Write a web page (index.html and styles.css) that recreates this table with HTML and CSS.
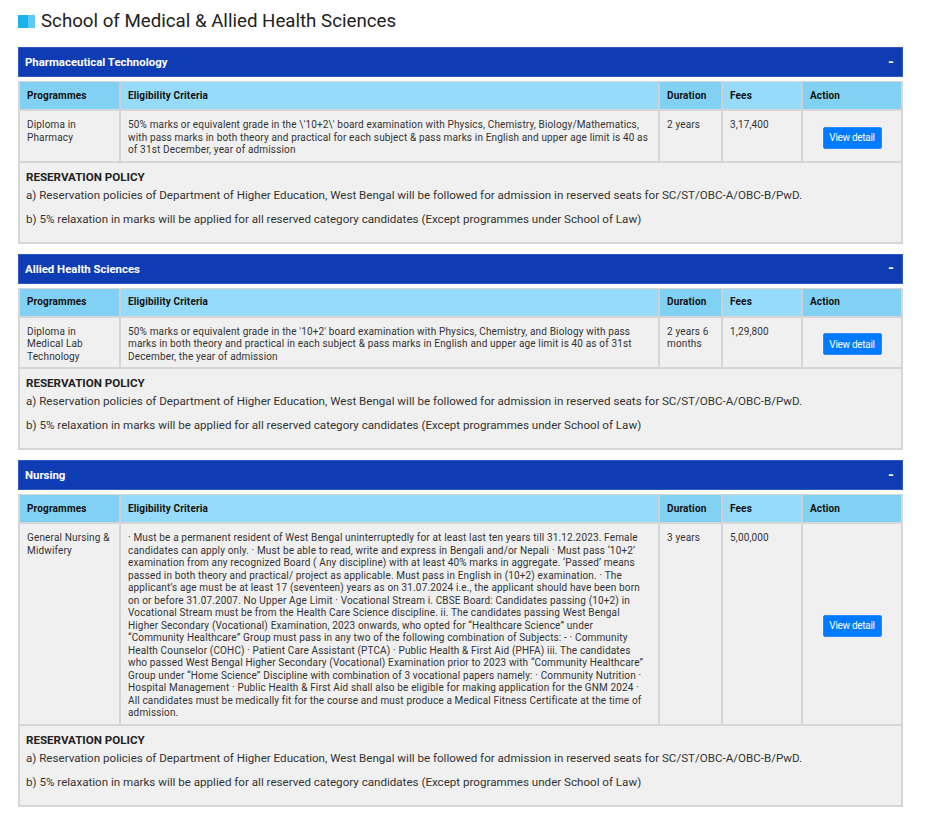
FILE: index.html
```html
<!DOCTYPE html>
<html>
<head>
<meta charset="utf-8">
<link rel="stylesheet" href="styles.css">
</head>
<body>
<div class="page">
  <h1 class="title"><span class="title-icon"><span class="sq1"></span><span class="sq2"></span></span>School of Medical &amp; Allied Health Sciences</h1>

  <section class="block">
    <div class="bar"><span>Pharmaceutical Technology</span><span class="toggle">-</span></div>
    <div class="panel">
      <table class="prog">
        <colgroup><col class="c1"><col class="c2"><col class="c3"><col class="c4"><col class="c5"></colgroup>
        <thead><tr><th class="dk">Programmes</th><th class="lt">Eligibility Criteria</th><th class="dk">Duration</th><th class="lt">Fees</th><th class="dk">Action</th></tr></thead>
        <tbody><tr>
          <td>Diploma in Pharmacy</td>
          <td>50% marks or equivalent grade in the \'10+2\' board examination with Physics, Chemistry, Biology/Mathematics, with pass marks in both theory and practical for each subject &amp; pass marks in English and upper age limit is 40 as of 31st December, year of admission</td>
          <td>2 years</td>
          <td>3,17,400</td>
          <td class="act"><button class="btn">View detail</button></td>
        </tr></tbody>
      </table>
      <div class="policy">
        <h4>RESERVATION POLICY</h4>
        <p>a) Reservation policies of Department of Higher Education, West Bengal will be followed for admission in reserved seats for SC/ST/OBC-A/OBC-B/PwD.</p>
        <p class="pb">b) 5% relaxation in marks will be applied for all reserved category candidates (Except programmes under School of Law)</p>
      </div>
    </div>
  </section>

  <section class="block">
    <div class="bar"><span>Allied Health Sciences</span><span class="toggle">-</span></div>
    <div class="panel">
      <table class="prog">
        <colgroup><col class="c1"><col class="c2"><col class="c3"><col class="c4"><col class="c5"></colgroup>
        <thead><tr><th class="dk">Programmes</th><th class="lt">Eligibility Criteria</th><th class="dk">Duration</th><th class="lt">Fees</th><th class="dk">Action</th></tr></thead>
        <tbody><tr>
          <td>Diploma in Medical Lab Technology</td>
          <td>50% marks or equivalent grade in the '10+2' board examination with Physics, Chemistry, and Biology with pass marks in both theory and practical in each subject &amp; pass marks in English and upper age limit is 40 as of 31st December, the year of admission</td>
          <td>2 years 6 months</td>
          <td>1,29,800</td>
          <td class="act"><button class="btn">View detail</button></td>
        </tr></tbody>
      </table>
      <div class="policy">
        <h4>RESERVATION POLICY</h4>
        <p>a) Reservation policies of Department of Higher Education, West Bengal will be followed for admission in reserved seats for SC/ST/OBC-A/OBC-B/PwD.</p>
        <p class="pb">b) 5% relaxation in marks will be applied for all reserved category candidates (Except programmes under School of Law)</p>
      </div>
    </div>
  </section>

  <section class="block">
    <div class="bar"><span>Nursing</span><span class="toggle">-</span></div>
    <div class="panel">
      <table class="prog">
        <colgroup><col class="c1"><col class="c2"><col class="c3"><col class="c4"><col class="c5"></colgroup>
        <thead><tr><th class="dk">Programmes</th><th class="lt">Eligibility Criteria</th><th class="dk">Duration</th><th class="lt">Fees</th><th class="dk">Action</th></tr></thead>
        <tbody><tr>
          <td>General Nursing &amp; Midwifery</td>
          <td>· Must be a permanent resident of West Bengal uninterruptedly for at least last ten years till 31.12.2023. Female candidates can apply only. · Must be able to read, write and express in Bengali and/or Nepali · Must pass ‘10+2’ examination from any recognized Board ( Any discipline) with at least 40% marks in aggregate. ‘Passed’ means passed in both theory and practical/ project as applicable. Must pass in English in (10+2) examination. · The applicant’s age must be at least 17 (seventeen) years as on 31.07.2024 i.e., the applicant should have been born on or before 31.07.2007. No Upper Age Limit · Vocational Stream i. CBSE Board: Candidates passing (10+2) in Vocational Stream must be from the Health Care Science discipline. ii. The candidates passing West Bengal Higher Secondary (Vocational) Examination, 2023 onwards, who opted for “Healthcare Science” under “Community Healthcare” Group must pass in any two of the following combination of Subjects: - · Community Health Counselor (COHC) · Patient Care Assistant (PTCA) · Public Health &amp; First Aid (PHFA) iii. The candidates who passed West Bengal Higher Secondary (Vocational) Examination prior to 2023 with “Community Healthcare” Group under “Home Science” Discipline with combination of 3 vocational papers namely: · Community Nutrition · Hospital Management · Public Health &amp; First Aid shall also be eligible for making application for the GNM 2024 · All candidates must be medically fit for the course and must produce a Medical Fitness Certificate at the time of admission.</td>
          <td>3 years</td>
          <td>5,00,000</td>
          <td class="act"><button class="btn">View detail</button></td>
        </tr></tbody>
      </table>
      <div class="policy">
        <h4>RESERVATION POLICY</h4>
        <p>a) Reservation policies of Department of Higher Education, West Bengal will be followed for admission in reserved seats for SC/ST/OBC-A/OBC-B/PwD.</p>
        <p class="pb">b) 5% relaxation in marks will be applied for all reserved category candidates (Except programmes under School of Law)</p>
      </div>
    </div>
  </section>
</div>
</body>
</html>
```
FILE: styles.css
```css
* { box-sizing: border-box; }
body {
  margin: 0;
  background: #fff;
  font-family: Roboto, "Liberation Sans", Arial, sans-serif;
  color: #333;
}
.page {
  width: 885px;
  margin-left: 18px;
  padding-top: 8px;
}
.title {
  display: flex;
  align-items: center;
  margin: 0 0 13px 0;
  font-size: 18.7px;
  font-weight: 400;
  line-height: 26px;
  color: #222;
}
.title-icon {
  display: flex;
  margin-right: 6px;
}
.sq1 { width: 10px; height: 13px; background: #1bb1ea; }
.sq2 { width: 7px; height: 13px; background: #5cc9f6; }

.block { margin-bottom: 10px; }
.bar {
  display: flex;
  justify-content: space-between;
  align-items: center;
  height: 30px;
  padding: 0 8px 0 6px;
  background: #0e3cb5;
  border: 1px solid #2f58c4;
  color: #fff;
  font-size: 11.4px;
  font-weight: 700;
}
.toggle { font-size: 15px; font-weight: 700; line-height: 1; }
.panel {
  margin-top: 4px;
  border: 2px solid #d6d6d6;
  border-top-width: 1px;
  background: #f0f0f0;
}
.prog {
  width: 100%;
  border-collapse: collapse;
  table-layout: fixed;
  font-size: 10px;
  line-height: 12.5px;
  letter-spacing: 0.15px;
}
.c1 { width: 100px; }
.c2 { width: 539px; }
.c3 { width: 63px; }
.c4 { width: 80px; }
.c5 { width: auto; }
.prog th {
  height: 28px;
  padding: 1px 7px 0 7px;
  text-align: left;
  font-weight: 700;
  color: #111;
  border-right: 2px solid #d0d0d0;
  border-bottom: 2px solid #d6d6d6;
}
.prog th:last-child, .prog td:last-child { border-right: none; }
.dk { background: #80d1f3; }
.lt { background: #97dbfa; }
.prog td {
  vertical-align: top;
  padding: 8px 7px 4px 7px;
  color: #333;
  border-right: 2px solid #d6d6d6;
  border-bottom: 2px solid #d6d6d6;
}
.prog td.act {
  vertical-align: middle;
  text-align: center;
}
.btn {
  width: 59px;
  height: 22px;
  padding: 0;
  border: 1px solid #2c8cff;
  border-radius: 2px;
  background: #007bff;
  color: #fff;
  font-family: Roboto, "Liberation Sans", Arial, sans-serif;
  font-size: 10px;
  letter-spacing: -0.3px;
}
.policy {
  padding: 6px 6px 14px 6px;
  font-size: 11.6px;
}
.policy h4 {
  margin: 0;
  font-size: 11.6px;
  line-height: 16px;
  font-weight: 700;
  color: #222;
}
.policy p {
  margin: 1px 0 0 0;
  line-height: 18px;
  color: #333;
}
.policy p.pb { margin-top: 6px; }
```
